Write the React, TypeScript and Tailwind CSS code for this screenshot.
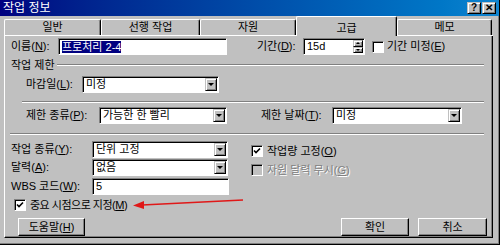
import React from 'react';

const sunken =
  'border border-t-[#808080] border-l-[#808080] border-r-white border-b-white shadow-[inset_1px_1px_0_#000]';
const raised =
  'border border-t-white border-l-white border-r-black border-b-black shadow-[inset_-1px_-1px_0_#808080]';
const raisedSmall =
  'border border-t-[#c0c0c0] border-l-[#c0c0c0] border-r-black border-b-black shadow-[inset_1px_1px_0_#fff,inset_-1px_-1px_0_#808080]';

const Key = ({ k }: { k: string }) => <span className="underline underline-offset-1">{k}</span>;

const DropBtn = () => (
  <div className={`flex w-[12px] items-center justify-center bg-[#c0c0c0] ${raisedSmall}`}>
    <div className="h-0 w-0 border-l-[3px] border-r-[3px] border-t-[3px] border-l-transparent border-r-transparent border-t-black" />
  </div>
);

const Combo = ({ value, w }: { value: string; w: string }) => (
  <div className={`flex h-[17px] ${w} shrink-0 bg-white ${sunken} p-[1px] pl-[2px]`}>
    <div className="flex-1 pl-[1px] leading-[13px]">{value}</div>
    <DropBtn />
  </div>
);

const Check = ({ on, disabled }: { on?: boolean; disabled?: boolean }) => (
  <div className={`h-[12px] w-[12px] shrink-0 ${disabled ? 'bg-[#c0c0c0]' : 'bg-white'} ${sunken} flex items-center justify-center`}>
    {on && (
      <svg width="8" height="8" viewBox="0 0 8 8">
        <path d="M1 3.5 L3 5.5 L7 1.5" stroke="#000" strokeWidth="1.6" fill="none" />
      </svg>
    )}
  </div>
);

const Tab = ({ label, w, active }: { label: string; w: string; active?: boolean }) =>
  active ? (
    <div className={`${w} flex h-[20px] justify-center rounded-t-[2px] border-l border-t border-r border-l-white border-t-white border-r-black pt-[3px] shadow-[inset_-1px_0_0_#808080]`}>
      {label}
    </div>
  ) : (
    <div className={`${w} flex h-[20px] flex-col justify-end border-b border-b-white`}>
      <div className="flex h-[16px] justify-center rounded-t-[2px] border-l border-t border-r border-l-white border-t-white border-r-black pt-[1px] shadow-[inset_-1px_0_0_#808080] leading-[13px]">
        {label}
      </div>
    </div>
  );

const Button = ({ children, w }: { children: React.ReactNode; w: string }) => (
  <div className={`flex h-[18px] ${w} items-center justify-center bg-[#c0c0c0] ${raised}`}>{children}</div>
);

const Etched = ({ className }: { className: string }) => (
  <div className={`h-[2px] border-t border-b border-t-[#808080] border-b-white ${className}`} />
);

export default function App() {
  return (
    <div className="relative h-[245px] w-[500px] overflow-hidden whitespace-nowrap border-r border-b border-r-black border-b-black bg-[#c0c0c0] text-[11px] text-black shadow-[inset_-1px_-1px_0_#808080] font-['Liberation_Sans','Noto_Sans_CJK_KR',sans-serif]">
      {/* title bar */}
      <div className="flex h-[16px] items-center bg-gradient-to-r from-[#000080] to-[#1084d0] pl-[3px] pr-[3px]">
        <div className="flex-1 text-[12px] leading-none text-white">작업 정보</div>
        <div className={`flex h-[12px] w-[14px] items-center justify-center bg-[#c0c0c0] ${raisedSmall} text-[10px] font-bold leading-none`}>?</div>
        <div className={`ml-[1px] flex h-[12px] w-[14px] items-center justify-center bg-[#c0c0c0] ${raisedSmall} text-[10px] font-bold leading-none`}>✕</div>
      </div>

      {/* tabs */}
      <div className="ml-[4px] flex h-[20px] w-[489px] items-end">
        <Tab label="일반" w="w-[97px]" />
        <Tab label="선행 작업" w="w-[99px]" />
        <Tab label="자원" w="w-[96px]" />
        <Tab label="고급" w="w-[101px]" active />
        <Tab label="메모" w="w-[95px]" />
        <div className="h-[20px] flex-1 border-b border-b-white" />
      </div>

      {/* panel */}
      <div className="ml-[4px] flex h-[202px] w-[489px] flex-col border-l border-r border-b border-l-white border-r-black border-b-black pl-[6px] shadow-[inset_-1px_-1px_0_#808080]">
        <div className="mt-[2px] flex h-[17px] items-center">
          <div className="w-[47px]">
            이름(<Key k="N" />):
          </div>
          <div className={`flex h-[17px] w-[169px] items-center bg-white pl-[3px] ${sunken}`}>
            <span className="bg-[#000080] leading-[12px] text-white">프로처리 2-4</span>
          </div>
          <div className="ml-[30px] w-[46px]">
            기간(<Key k="D" />):
          </div>
          <div className={`flex h-[17px] w-[62px] bg-white ${sunken} p-[1px] pl-[3px]`}>
            <div className="flex-1 leading-[13px]">15d</div>
            <div className="flex w-[10px] flex-col">
              <div className={`flex flex-1 items-center justify-center bg-[#c0c0c0] ${raisedSmall}`}>
                <div className="h-0 w-0 border-l-[2px] border-r-[2px] border-b-[2px] border-l-transparent border-r-transparent border-b-black" />
              </div>
              <div className={`flex flex-1 items-center justify-center bg-[#c0c0c0] ${raisedSmall}`}>
                <div className="h-0 w-0 border-l-[2px] border-r-[2px] border-t-[2px] border-l-transparent border-r-transparent border-t-black" />
              </div>
            </div>
          </div>
          <div className="ml-[7px]">
            <Check />
          </div>
          <div className="ml-[3px]">
            기간 미정(<Key k="E" />)
          </div>
        </div>

        <div className="mt-[3px] flex h-[14px] items-center">
          <div className="pr-[2px]">작업 제한</div>
          <Etched className="mr-[8px] flex-1" />
        </div>

        <div className="ml-[15px] mt-[4px] flex h-[17px] items-center">
          <div className="w-[56px]">
            마감일(<Key k="L" />):
          </div>
          <Combo value="미정" w="w-[137px]" />
        </div>

        <Etched className="ml-[11px] mr-[8px] mt-[8px]" />

        <div className="ml-[15px] mt-[4px] flex h-[17px] items-center">
          <div className="w-[73px] shrink-0">
            제한 종류(<Key k="P" />):
          </div>
          <Combo value="가능한 한 빨리" w="w-[128px]" />
          <div className="ml-[34px] w-[71px] shrink-0">
            제한 날짜(<Key k="T" />):
          </div>
          <Combo value="미정" w="w-[130px]" />
        </div>

        <Etched className="ml-[-1px] mr-[8px] mt-[9px]" />

        <div className="mt-[6px] flex">
          <div className="flex w-[236px] flex-col">
            <div className="flex h-[17px] items-center">
              <div className="w-[81px] shrink-0">
                작업 종류(<Key k="Y" />):
              </div>
              <Combo value="단위 고정" w="w-[136px]" />
            </div>
            <div className="mt-[1px] flex h-[17px] items-center">
              <div className="w-[81px] shrink-0">
                달력(<Key k="A" />):
              </div>
              <Combo value="없음" w="w-[136px]" />
            </div>
            <div className="mt-[2px] flex h-[17px] items-center">
              <div className="w-[81px] shrink-0">
                WBS 코드(<Key k="W" />):
              </div>
              <div className={`flex h-[17px] w-[137px] items-center bg-white pl-[3px] ${sunken}`}>5</div>
            </div>
          </div>
          <div className="ml-[4px] flex flex-col">
            <div className="mt-[2px] flex h-[16px] items-center">
              <Check on />
              <div className="ml-[4px]">
                작업량 고정(<Key k="O" />)
              </div>
            </div>
            <div className="mt-[3px] flex h-[16px] items-center">
              <Check disabled />
              <div className="ml-[4px] text-[#808080] [text-shadow:1px_1px_0_#fff]">
                자원 달력 무시(<Key k="G" />)
              </div>
            </div>
          </div>
        </div>

        <div className="ml-[3px] mt-[3px] flex h-[14px] items-center">
          <Check on />
          <div className="ml-[4px] tracking-[-0.5px]">
            중요 시점으로 지정(<Key k="M" />)
          </div>
        </div>

        <div className="mt-[6px] flex h-[18px] items-center">
          <div className="ml-[7px]">
            <Button w="w-[67px]">
              도움말(<Key k="H" />)
            </Button>
          </div>
          <div className="ml-[256px]">
            <Button w="w-[68px]">확인</Button>
          </div>
          <div className="ml-[9px]">
            <Button w="w-[69px]">취소</Button>
          </div>
        </div>
      </div>

      {/* annotation arrow */}
      <svg className="pointer-events-none absolute left-0 top-0" width="500" height="245">
        <line x1="243" y1="200" x2="142" y2="205" stroke="#e01818" strokeWidth="1.5" />
        <polygon points="133,205.5 144,201 144,209" fill="#e01818" />
      </svg>
    </div>
  );
}
